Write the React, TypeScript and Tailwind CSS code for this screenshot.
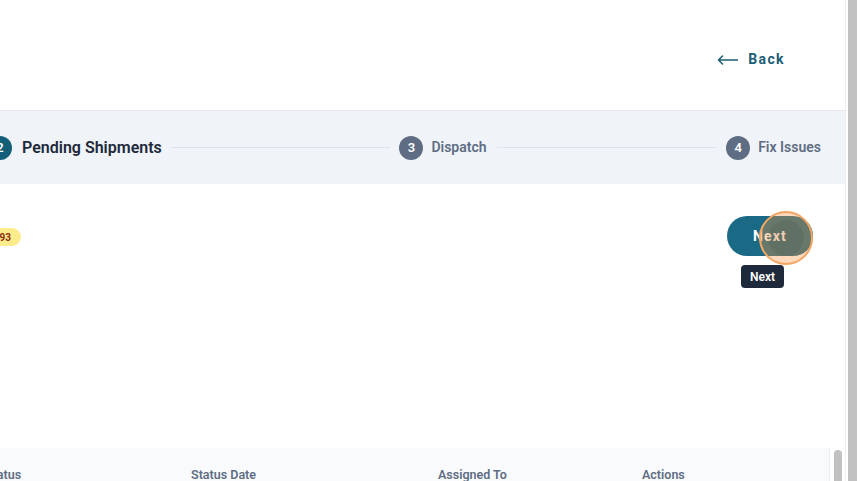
import React from "react";

function Step({ n, label, active }: { n: number; label: string; active?: boolean }) {
  return (
    <div className="flex items-center shrink-0">
      <div
        className={
          active
            ? "w-6 h-6 rounded-full bg-[#135f7a] text-white text-[13px] font-semibold flex items-center justify-center"
            : "w-6 h-6 rounded-full bg-[#5f6d84] text-white text-[13px] font-semibold flex items-center justify-center"
        }
      >
        {n}
      </div>
      <span
        className={
          active
            ? "ml-[10px] text-[16px] font-semibold text-[#1e293b]"
            : "ml-[8px] text-[14px] font-semibold text-[#5f6d84]"
        }
      >
        {label}
      </span>
    </div>
  );
}

export default function App() {
  return (
    <div
      className="w-[860px] h-[481px] overflow-hidden flex bg-white"
      style={{ fontFamily: "Roboto, 'Noto Sans', sans-serif" }}
    >
      <div className="w-[846px] h-full flex flex-col border-r border-[#eceef1] overflow-hidden">
        {/* Header */}
        <div className="h-[111px] border-b border-[#e5e9ee] flex items-center justify-end pr-[60px] shrink-0">
          <button className="flex items-center gap-[10px] text-[#1b5e75] mt-[9px]">
            <svg width="21" height="10" viewBox="0 0 21 10" fill="none">
              <path d="M20.5 5H1.5M1.5 5L5.5 1M1.5 5L5.5 9" stroke="#1b5e75" strokeWidth="1.6" strokeLinecap="round" strokeLinejoin="round" />
            </svg>
            <span className="text-[14px] font-bold tracking-[1.4px]">Back</span>
          </button>
        </div>

        {/* Stepper */}
        <div className="h-[73px] bg-[#f0f4f8] flex items-center shrink-0 pr-[12px]">
          <div className="flex items-center w-full ml-[-12px]">
            <Step n={2} label="Pending Shipments" active />
            <div className="flex-1 h-px bg-[#dde3ea] mx-[9px]" />
            <Step n={3} label="Dispatch" />
            <div className="flex-1 h-px bg-[#dde3ea] mx-[10px]" />
            <Step n={4} label="Fix Issues" />
          </div>
        </div>

        {/* Body */}
        <div className="h-[264px] shrink-0 flex items-start justify-between pr-[32px] pt-[32px]">
          <div className="mt-[12px] ml-[-22px] h-[18px] px-[10px] rounded-full bg-[#fdec8c] flex items-center">
            <span className="text-[10px] font-bold text-[#8a2d0c]">1393</span>
          </div>
          <div className="relative">
            <button className="w-[86px] h-[40px] rounded-full bg-[#1a6a85] text-white text-[14px] font-bold tracking-[1.2px] flex items-center justify-center">
              Next
            </button>
            <div className="absolute left-[32px] top-[-5px] w-[54px] h-[54px] rounded-full border-2 border-[#f4a562] bg-[rgba(251,146,60,0.35)] flex items-center justify-center">
              <div className="w-[36px] h-[36px] rounded-full bg-[rgba(0,0,0,0.06)]" />
            </div>
            <div className="absolute left-[14px] top-[49px] h-[23px] px-[9px] rounded bg-[#1e293b] text-white text-[12px] font-semibold flex items-center">
              Next
            </div>
          </div>
        </div>

        {/* Table header */}
        <div className="flex-1 flex">
          <div className="flex-1 bg-[#f8fafc] pt-[18px]">
            <div className="grid grid-cols-[206px_247px_204px_1fr] ml-[-15px] text-[12.5px] font-semibold text-[#5f6d84]">
              <span>Status</span>
              <span>Status Date</span>
              <span>Assigned To</span>
              <span>Actions</span>
            </div>
          </div>
          <div className="w-[16px] bg-white border-l border-[#eceef1] pt-[2px] flex justify-center">
            <div className="w-[8px] h-full bg-[#c1c1c1] rounded-t-full" />
          </div>
        </div>
      </div>
      <div className="w-[14px] h-full bg-white flex pl-[2px]">
        <div className="w-[9px] h-full bg-[#c1c1c1]" />
      </div>
    </div>
  );
}
